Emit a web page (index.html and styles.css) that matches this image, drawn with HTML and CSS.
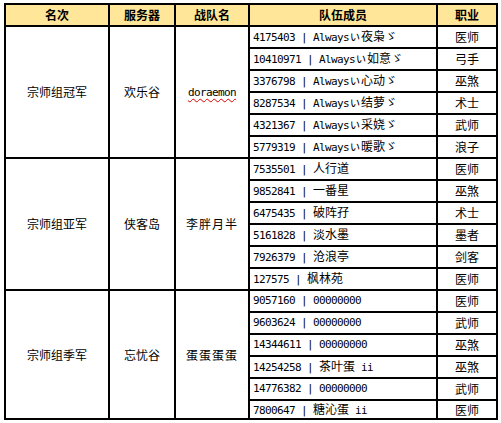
FILE: index.html
```html
<!DOCTYPE html>
<html>
<head>
<meta charset="utf-8">
<link rel="stylesheet" href="styles.css">
</head>
<body>
<table class="t">
<colgroup>
<col class="w1"><col class="w2"><col class="w3"><col class="w4"><col class="w5">
</colgroup>
<thead>
<tr class="hd"><th>名次</th><th>服务器</th><th>战队名</th><th>队伍成员</th><th>职业</th></tr>
</thead>
<tbody>
<tr><td rowspan="6" class="cn">宗师组冠军</td><td rowspan="6" class="cn">欢乐谷</td><td rowspan="6" class="cn"><span class="spell">doraemon</span></td><td class="m">4175403 | Always<span class="c">ぃ夜枭ゞ</span></td><td class="cn">医师</td></tr>
<tr><td class="m">10410971 | Always<span class="c">ぃ如意ゞ</span></td><td class="cn">弓手</td></tr>
<tr><td class="m">3376798 | Always<span class="c">ぃ心动ゞ</span></td><td class="cn">巫煞</td></tr>
<tr><td class="m">8287534 | Always<span class="c">ぃ结萝ゞ</span></td><td class="cn">术士</td></tr>
<tr><td class="m">4321367 | Always<span class="c">ぃ采娆ゞ</span></td><td class="cn">武师</td></tr>
<tr><td class="m">5779319 | Always<span class="c">ぃ暖歌ゞ</span></td><td class="cn">浪子</td></tr>

<tr><td rowspan="6" class="cn">宗师组亚军</td><td rowspan="6" class="cn">侠客岛</td><td rowspan="6" class="cn sp">李胖月半</td><td class="m">7535501 | <span class="c">人行道</span></td><td class="cn">医师</td></tr>
<tr><td class="m">9852841 | <span class="c">一番星</span></td><td class="cn">巫煞</td></tr>
<tr><td class="m">6475435 | <span class="c">破阵孖</span></td><td class="cn">术士</td></tr>
<tr><td class="m">5161828 | <span class="c">淡水墨</span></td><td class="cn">墨者</td></tr>
<tr><td class="m">7926379 | <span class="c">沧浪亭</span></td><td class="cn">剑客</td></tr>
<tr><td class="m">127575 | <span class="c">枫林苑</span></td><td class="cn">医师</td></tr>

<tr><td rowspan="6" class="cn">宗师组季军</td><td rowspan="6" class="cn">忘忧谷</td><td rowspan="6" class="cn sp">蛋蛋蛋蛋</td><td class="m">9057160 | 00000000</td><td class="cn">医师</td></tr>
<tr><td class="m">9603624 | 00000000</td><td class="cn">武师</td></tr>
<tr><td class="m">14344611 | 00000000</td><td class="cn">巫煞</td></tr>
<tr><td class="m">14254258 | <span class="c">茶叶蛋</span> ii</td><td class="cn">巫煞</td></tr>
<tr><td class="m">14776382 | 00000000</td><td class="cn">武师</td></tr>
<tr class="last"><td class="m">7800647 | <span class="c">糖沁蛋</span> ii</td><td class="cn">医师</td></tr>
</tbody>
</table>
</body>
</html>
```
FILE: styles.css
```css
html, body {
  margin: 0;
  padding: 0;
  background: #ffffff;
}
body {
  padding: 3px 0 0 4px;
  font-family: "Noto Sans CJK SC", sans-serif;
  font-size: 12px;
  color: #000;
}
.t {
  border-collapse: collapse;
  table-layout: fixed;
  width: 492px;
}
.w1 { width: 104px; }
.w2 { width: 66px; }
.w3 { width: 74px; }
.w4 { width: 188px; }
.w5 { width: 60px; }
.t th, .t td {
  border: 2px solid #000;
  padding: 0;
  line-height: 14px;
}
.t tr { height: 22px; }
.t tr.last { height: 19px; }
.hd th {
  background: #ffe699;
  font-weight: 700;
  font-size: 12px;
  text-align: center;
  vertical-align: middle;
}
.cn {
  text-align: center;
  vertical-align: middle;
}
.sp { letter-spacing: 1px; }
.spell {
  font-family: "DejaVu Sans Mono", monospace;
  font-size: 11px;
  letter-spacing: -0.6px;
  text-decoration: underline wavy #e00000;
  text-decoration-thickness: 1px;
  text-underline-offset: 2px;
}
.m {
  font-family: "DejaVu Sans Mono", monospace;
  font-size: 11px;
  letter-spacing: -0.62px;
  padding-left: 3px !important;
  white-space: pre;
  vertical-align: middle;
}
.c {
  font-family: "Noto Sans CJK SC", sans-serif;
  font-size: 12px;
  letter-spacing: 0;
}
```
